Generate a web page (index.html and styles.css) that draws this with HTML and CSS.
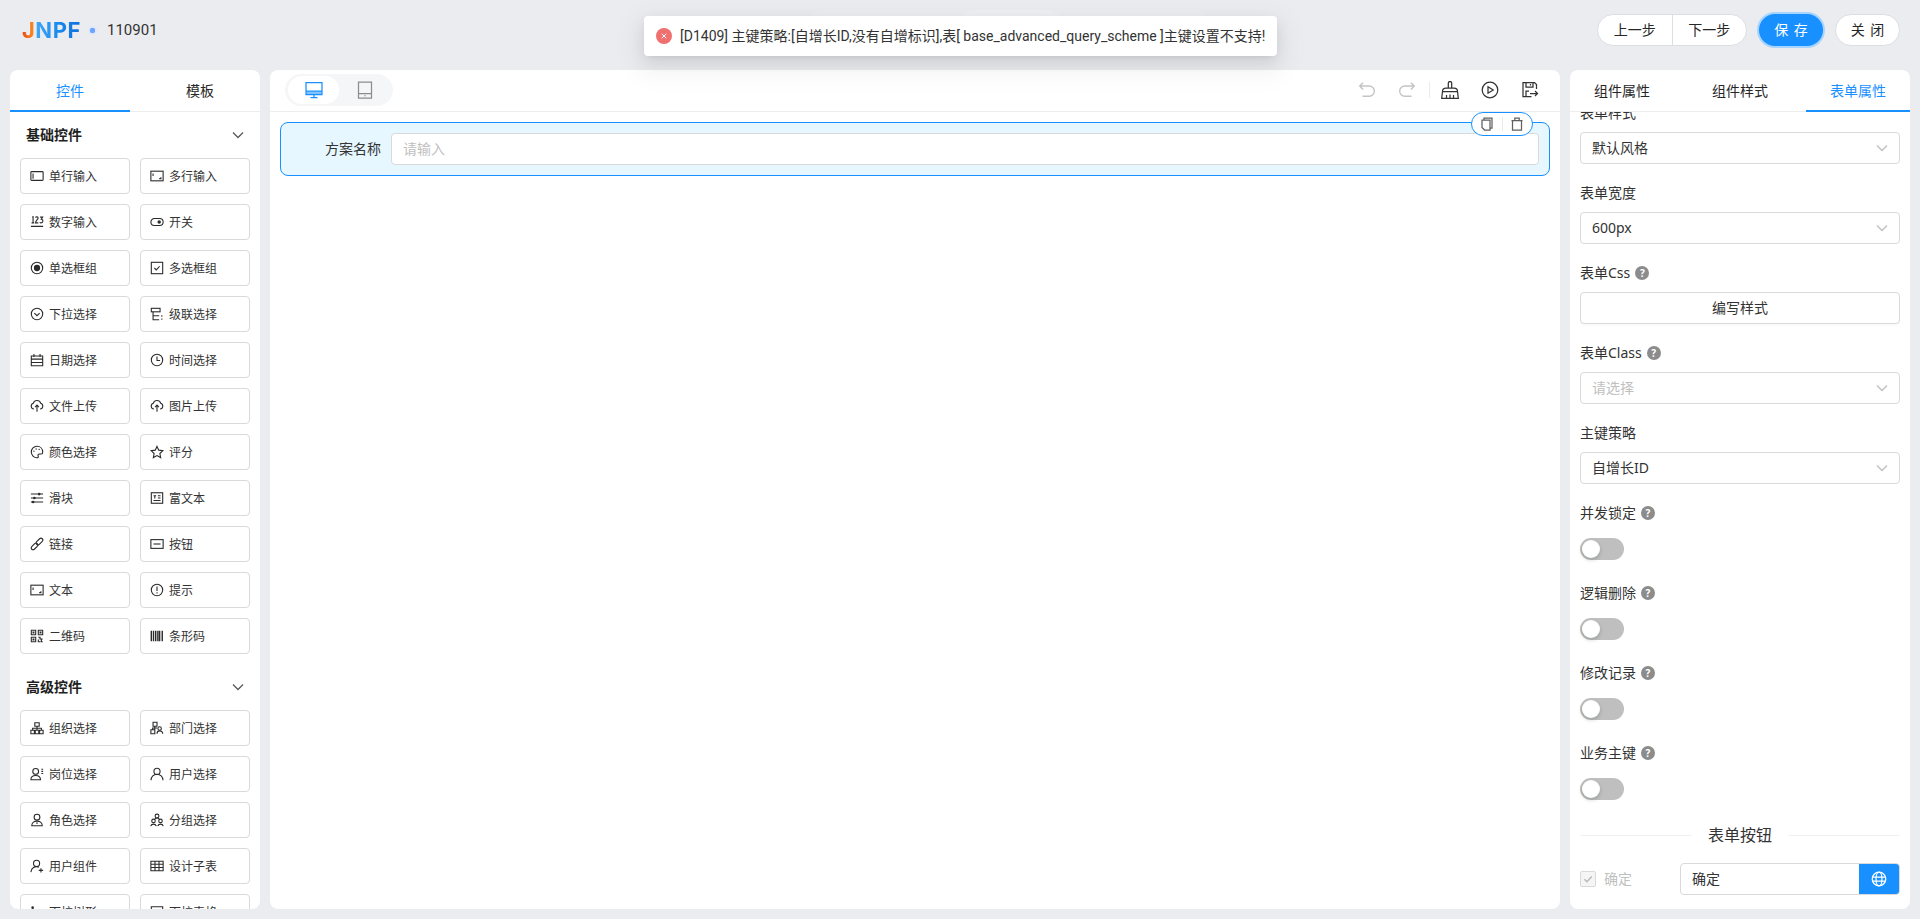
FILE: index.html
```html
<!DOCTYPE html>
<html lang="zh-CN">
<head>
<meta charset="utf-8">
<title>JNPF 表单设计</title>
<link rel="stylesheet" href="styles.css">
</head>
<body>
<svg class="sprite" aria-hidden="true">
  <symbol id="i-input" viewBox="0 0 16 16"><rect x="1" y="3" width="14" height="10" rx="1"/><path d="M3.500 5v6"/></symbol>
  <symbol id="i-area" viewBox="0 0 16 16"><rect x="1" y="2.500" width="14" height="11"/><path d="M3.500 5v3M10.500 11h2V9.500"/></symbol>
  <symbol id="i-num" viewBox="0 0 16 16"><path d="M2.500 2.500l1-.5v7M1.800 9h3M6.300 3c.4-1.200 3-1.200 3 .4 0 1.500-3 3.300-3 5.600h3.200M11.500 2.400h3l-1.600 2.500c2.500 0 2.500 4.100-.2 4.100-.8 0-1.300-.4-1.500-.8M1 13h14"/></symbol>
  <symbol id="i-switch" viewBox="0 0 16 16"><rect x="1" y="4" width="14" height="8" rx="4"/><circle cx="10.500" cy="8" r="2" class="fill"/></symbol>
  <symbol id="i-radio" viewBox="0 0 16 16"><circle cx="8" cy="8" r="6.500"/><circle cx="8" cy="8" r="3.600" class="fill"/></symbol>
  <symbol id="i-check" viewBox="0 0 16 16"><rect x="1.500" y="1.500" width="13" height="13"/><path d="M5 8l2.200 2.200L11 6"/></symbol>
  <symbol id="i-select" viewBox="0 0 16 16"><circle cx="8" cy="8" r="6.500"/><path d="M5 7l3 3 3-3"/></symbol>
  <symbol id="i-cascade" viewBox="0 0 16 16"><rect x="1.500" y="1.500" width="10" height="4"/><path d="M3.500 5.500v9h7M3.500 10h7M13.500 9.500v1.500M13.500 13v1.500"/></symbol>
  <symbol id="i-date" viewBox="0 0 16 16"><path d="M1.500 3.500h13v11h-13zM1.500 7h13M1.500 10.800h13M4.500 1v3.500M11.500 1v3.500"/></symbol>
  <symbol id="i-time" viewBox="0 0 16 16"><circle cx="8" cy="8" r="6.500"/><path d="M8 4v4.500h3.500"/></symbol>
  <symbol id="i-upload" viewBox="0 0 16 16"><path d="M4.500 11.500A3.400 3.400 0 0 1 3.700 4.900 4.500 4.500 0 0 1 12.300 4.900 3.400 3.400 0 0 1 11.500 11.500M8 14.500V7M5.800 9.200 8 7l2.200 2.200"/></symbol>
  <symbol id="i-palette" viewBox="0 0 16 16"><path d="M8 1.500a6.500 6.500 0 1 0 0 13c1.500 0 1.800-1 1.300-2-.6-1.200.2-2.200 1.500-2.200h2.200c1 0 1.500-.7 1.500-2.100C14.500 4 11.500 1.500 8 1.500z"/><circle cx="4.500" cy="7" r=".8" class="fill"/><circle cx="7" cy="4.500" r=".8" class="fill"/><circle cx="10.500" cy="5" r=".8" class="fill"/></symbol>
  <symbol id="i-star" viewBox="0 0 16 16"><path d="M8 1.600l2 4.300 4.700.6-3.400 3.200.9 4.700L8 12.100l-4.200 2.300.9-4.700L1.300 6.500 6 5.900z"/></symbol>
  <symbol id="i-slider" viewBox="0 0 16 16"><path d="M1 3.500h14M1 8h14M1 12.500h14"/><circle cx="10.500" cy="3.500" r="1.500" class="fill"/><circle cx="5" cy="8" r="1.500" class="fill"/><circle cx="3.500" cy="12.500" r="1.500" class="fill"/></symbol>
  <symbol id="i-rich" viewBox="0 0 16 16"><rect x="1.500" y="2" width="13" height="12"/><path d="M4 5.500h3M5.500 5.500v3M9 5.500h3M9 8h3M4 10.800h8"/></symbol>
  <symbol id="i-link" viewBox="0 0 16 16"><g transform="rotate(-45 8 8)"><rect x="-.5" y="5.900" width="9" height="4.200" rx="2.100"/><rect x="7.500" y="5.900" width="9" height="4.200" rx="2.100"/></g></symbol>
  <symbol id="i-button" viewBox="0 0 16 16"><rect x="1" y="3" width="14" height="10"/><path d="M4 8h8"/></symbol>
  <symbol id="i-alert" viewBox="0 0 16 16"><circle cx="8" cy="8" r="6.500"/><path d="M8 4v5M8 10.500V12"/></symbol>
  <symbol id="i-qr" viewBox="0 0 16 16"><path d="M1.500 1.500h5v5h-5zM9.500 1.500h5v5h-5zM1.500 9.500h5v5h-5zM3.500 3.500h1v1h-1zM11.500 3.500h1v1h-1zM3.500 11.500h1v1h-1zM9.500 9.500h2v2h3M9.500 12v2.500h2.500M13 12v2.500h1.500"/></symbol>
  <symbol id="i-bar" viewBox="0 0 16 16"><path d="M1.500 2v12M4 2v12M6.500 2v12M9 2v12M11 2v12M14 2v12" class="thick"/></symbol>
  <symbol id="i-org" viewBox="0 0 16 16"><path d="M5.500 2h5v4h-5zM1 10.500h4v4H1zM6 10.500h4v4H6zM11 10.500h4v4h-4zM8 6v4.500M3 10.500V8.300h10v2.200"/></symbol>
  <symbol id="i-dept" viewBox="0 0 16 16"><path d="M3.500 1.500h4.500v4.500H3.500zM1 10h4.500v4.500H1zM5.500 6v4M3 10V8h5"/><circle cx="11" cy="8.500" r="2"/><path d="M8 14.500a3 3 0 0 1 6.500 0"/></symbol>
  <symbol id="i-post" viewBox="0 0 16 16"><circle cx="6.500" cy="5" r="3.300"/><path d="M1 14.500c0-6.500 11-6.500 11 0zM13 2.500h2M13 5h2M13 7.500h2"/></symbol>
  <symbol id="i-user" viewBox="0 0 16 16"><circle cx="8" cy="5" r="3.500"/><path d="M1.200 15a6.800 6.800 0 0 1 13.600 0"/></symbol>
  <symbol id="i-role" viewBox="0 0 16 16"><circle cx="8" cy="4.800" r="3.300"/><path d="M2 14.500c0-7 12-7 12 0zM8 10.500v2"/></symbol>
  <symbol id="i-group" viewBox="0 0 16 16"><circle cx="8" cy="3.500" r="2.200"/><circle cx="4" cy="9" r="2"/><circle cx="12" cy="9" r="2"/><path d="M.8 15a3.400 3.400 0 0 1 6.400 0M8.800 15a3.400 3.400 0 0 1 6.400 0M5.500 7a3 3 0 0 1 5 0"/></symbol>
  <symbol id="i-ucomp" viewBox="0 0 16 16"><circle cx="7.500" cy="5" r="3.500"/><path d="M1 15a6.500 6.500 0 0 1 9-5.700M12.500 10.500v5M10 13h5"/></symbol>
  <symbol id="i-table" viewBox="0 0 16 16"><path d="M1 2.500h14v11H1zM1 6h14M1 9.800h14M5.700 2.500v11M10.300 2.500v11"/></symbol>
  <symbol id="i-tree" viewBox="0 0 16 16"><circle cx="3" cy="3" r="1.500" class="fill"/><path d="M3 4v10M3 8h4M3 13h4"/></symbol>
  <symbol id="i-dtable" viewBox="0 0 16 16"><path d="M1.500 2h13v12h-13zM1.500 5.500h13M1.500 9h13"/></symbol>
  <symbol id="i-chev" viewBox="0 0 12 12"><path d="M1 3.500l5 5 5-5"/></symbol>
  <symbol id="i-undo" viewBox="0 0 16 16"><path d="M4.500 1.500L1.500 4.500l3 3M1.500 4.500h8.500a4 4 0 0 1 0 9H4"/></symbol>
  <symbol id="i-redo" viewBox="0 0 16 16"><path d="M11.500 1.500l3 3-3 3M14.500 4.500H6a4 4 0 0 0 0 9h6"/></symbol>
  <symbol id="i-brush" viewBox="0 0 18 18"><path d="M7.300 7V2.200a1.700 1.700 0 0 1 3.400 0V7zM1.500 10.500c0-2.500 1.500-3.500 3.500-3.500h8c2 0 3.500 1 3.500 3.500zM1.500 10.500.7 17.300h16.600l-.8-6.800M5.500 17.300V14M9 17.300v-3.800M12.500 17.300V14"/></symbol>
  <symbol id="i-play" viewBox="0 0 18 18"><circle cx="9" cy="9" r="7.800"/><path d="M7 5.800L12.200 9 7 12.200z"/></symbol>
  <symbol id="i-save" viewBox="0 0 18 18"><path d="M10.500 15.500H2V1.500h11.500l2 2V8M5 1.500v4.500h7V1.500M9.500 3v1.500M9 12.500h7.500M14 10l2.500 2.500L14 15M5 15.500V10h3"/></symbol>
  <symbol id="i-desktop" viewBox="0 0 18 18"><path d="M1 1.500h16v12.200H1zM1 10h16M9 13.700v2.800M5.500 16.500h7"/><path d="M1 10.500h16v3H1z" class="band"/></symbol>
  <symbol id="i-tablet" viewBox="0 0 18 18"><path d="M2.500 1h13v16h-13zM2.500 12.500h13"/><circle cx="9" cy="14.800" r=".7" class="fill"/></symbol>
  <symbol id="i-copy" viewBox="0 0 14 14"><path d="M4 2.800V1h8v10h-2M2 3h8v10H4.500L2 10.500z"/></symbol>
  <symbol id="i-trash" viewBox="0 0 14 14"><path d="M2.500 3.500h9V13h-9zM1.500 3.500h11M4.800 3.500V1.200h4.400v2.300"/></symbol>
  <symbol id="i-globe" viewBox="0 0 16 16"><circle cx="8" cy="8" r="6.800"/><ellipse cx="8" cy="8" rx="3" ry="6.800"/><path d="M1.500 6h13M1.500 10h13"/></symbol>
  <symbol id="i-tick" viewBox="0 0 16 16"><path d="M3.800 8.200l3 3 5.500-6"/></symbol>
</svg>

<header class="topbar">
  <div class="brand">
    <span class="logo">JNPF</span>
    <i class="brand-dot"></i>
    <span class="form-name">110901</span>
  </div>
  <div class="steps"><span class="step"></span><span class="step step-on"></span><span class="step"></span></div>
  <div class="top-actions">
    <div class="btn-group"><button class="pill">上一步</button><button class="pill">下一步</button></div>
    <button class="save">保 存</button>
    <button class="close">关 闭</button>
  </div>
</header>

<div class="toast">
  <svg class="toast-icon" viewBox="0 0 16 16"><circle cx="8" cy="8" r="8"/><path d="M5.700 5.700l4.600 4.600M10.300 5.700l-4.600 4.600"/></svg>
  <span>[D1409] 主键策略:[自增长ID,没有自增标识],表[ base_advanced_query_scheme ]主键设置不支持!</span>
</div>

<main class="workspace">
  <aside class="panel left">
    <div class="tabs"><div class="tab tab-left on">控件</div><div class="tab tab-left">模板</div></div>
    <div class="palette">
      <div class="sec-head"><span>基础控件</span><svg class="chev"><use href="#i-chev"/></svg></div>
      <div class="grid">
        <div class="comp"><svg class="ic"><use href="#i-input"/></svg>单行输入</div>
        <div class="comp"><svg class="ic"><use href="#i-area"/></svg>多行输入</div>
        <div class="comp"><svg class="ic"><use href="#i-num"/></svg>数字输入</div>
        <div class="comp"><svg class="ic"><use href="#i-switch"/></svg>开关</div>
        <div class="comp"><svg class="ic"><use href="#i-radio"/></svg>单选框组</div>
        <div class="comp"><svg class="ic"><use href="#i-check"/></svg>多选框组</div>
        <div class="comp"><svg class="ic"><use href="#i-select"/></svg>下拉选择</div>
        <div class="comp"><svg class="ic"><use href="#i-cascade"/></svg>级联选择</div>
        <div class="comp"><svg class="ic"><use href="#i-date"/></svg>日期选择</div>
        <div class="comp"><svg class="ic"><use href="#i-time"/></svg>时间选择</div>
        <div class="comp"><svg class="ic"><use href="#i-upload"/></svg>文件上传</div>
        <div class="comp"><svg class="ic"><use href="#i-upload"/></svg>图片上传</div>
        <div class="comp"><svg class="ic"><use href="#i-palette"/></svg>颜色选择</div>
        <div class="comp"><svg class="ic"><use href="#i-star"/></svg>评分</div>
        <div class="comp"><svg class="ic"><use href="#i-slider"/></svg>滑块</div>
        <div class="comp"><svg class="ic"><use href="#i-rich"/></svg>富文本</div>
        <div class="comp"><svg class="ic"><use href="#i-link"/></svg>链接</div>
        <div class="comp"><svg class="ic"><use href="#i-button"/></svg>按钮</div>
        <div class="comp"><svg class="ic"><use href="#i-area"/></svg>文本</div>
        <div class="comp"><svg class="ic"><use href="#i-alert"/></svg>提示</div>
        <div class="comp"><svg class="ic"><use href="#i-qr"/></svg>二维码</div>
        <div class="comp"><svg class="ic"><use href="#i-bar"/></svg>条形码</div>
      </div>
      <div class="sec-head sec-next"><span>高级控件</span><svg class="chev"><use href="#i-chev"/></svg></div>
      <div class="grid">
        <div class="comp"><svg class="ic"><use href="#i-org"/></svg>组织选择</div>
        <div class="comp"><svg class="ic"><use href="#i-dept"/></svg>部门选择</div>
        <div class="comp"><svg class="ic"><use href="#i-post"/></svg>岗位选择</div>
        <div class="comp"><svg class="ic"><use href="#i-user"/></svg>用户选择</div>
        <div class="comp"><svg class="ic"><use href="#i-role"/></svg>角色选择</div>
        <div class="comp"><svg class="ic"><use href="#i-group"/></svg>分组选择</div>
        <div class="comp"><svg class="ic"><use href="#i-ucomp"/></svg>用户组件</div>
        <div class="comp"><svg class="ic"><use href="#i-table"/></svg>设计子表</div>
        <div class="comp"><svg class="ic"><use href="#i-tree"/></svg>下拉树形</div>
        <div class="comp"><svg class="ic"><use href="#i-dtable"/></svg>下拉表格</div>
      </div>
    </div>
  </aside>

  <section class="panel center">
    <div class="toolbar">
      <div class="device">
        <span class="dev dev-on"><svg class="ic18"><use href="#i-desktop"/></svg></span>
        <span class="dev dev-off"><svg class="ic18"><use href="#i-tablet"/></svg></span>
      </div>
      <div class="tools">
        <span class="tool off"><svg class="ic18"><use href="#i-undo"/></svg></span>
        <span class="tool off"><svg class="ic18"><use href="#i-redo"/></svg></span>
        <i class="tool-sep"></i>
        <span class="tool"><svg class="ic18"><use href="#i-brush"/></svg></span>
        <span class="tool"><svg class="ic18"><use href="#i-play"/></svg></span>
        <span class="tool"><svg class="ic18"><use href="#i-save"/></svg></span>
      </div>
    </div>
    <div class="canvas">
      <div class="row-item">
        <label class="row-label">方案名称</label>
        <div class="row-input">请输入</div>
        <div class="row-actions">
          <span class="row-act"><svg class="ic14"><use href="#i-copy"/></svg></span>
          <span class="row-act"><svg class="ic14"><use href="#i-trash"/></svg></span>
        </div>
      </div>
    </div>
  </section>

  <aside class="panel right">
    <div class="tabs"><div class="tab tab-right">组件属性</div><div class="tab tab-right">组件样式</div><div class="tab tab-right on">表单属性</div></div>
    <div class="props">
      <form class="props-inner">
        <div class="field"><div class="f-label">表单样式</div><div class="sel">默认风格<svg class="sel-chev"><use href="#i-chev"/></svg></div></div>
        <div class="field"><div class="f-label">表单宽度</div><div class="sel">600px<svg class="sel-chev"><use href="#i-chev"/></svg></div></div>
        <div class="field"><div class="f-label">表单Css<i class="help">?</i></div><div class="wide-btn">编写样式</div></div>
        <div class="field"><div class="f-label">表单Class<i class="help">?</i></div><div class="sel ph">请选择<svg class="sel-chev"><use href="#i-chev"/></svg></div></div>
        <div class="field"><div class="f-label">主键策略</div><div class="sel">自增长ID<svg class="sel-chev"><use href="#i-chev"/></svg></div></div>
        <div class="field"><div class="f-label">并发锁定<i class="help">?</i></div><div class="ctl"><span class="sw"></span></div></div>
        <div class="field"><div class="f-label">逻辑删除<i class="help">?</i></div><div class="ctl"><span class="sw"></span></div></div>
        <div class="field"><div class="f-label">修改记录<i class="help">?</i></div><div class="ctl"><span class="sw"></span></div></div>
        <div class="field"><div class="f-label">业务主键<i class="help">?</i></div><div class="ctl"><span class="sw"></span></div></div>
        <div class="divider"><span>表单按钮</span></div>
        <div class="btn-row">
          <div class="cb-wrap"><span class="cb"><svg class="cb-tick"><use href="#i-tick"/></svg></span><span class="cb-text">确定</span></div>
          <div class="addon-input"><span class="addon-text">确定</span><span class="addon"><svg class="globe"><use href="#i-globe"/></svg></span></div>
        </div>
      </form>
    </div>
  </aside>
</main>
</body>
</html>
```

FILE: styles.css
```css
* { box-sizing: border-box; }
html, body { height: 100%; }
body {
  margin: 0;
  background: #ebecf0;
  color: #262626;
  font: 14px/22px "Noto Sans", "Noto Sans CJK SC", sans-serif;
  overflow: hidden;
  position: relative;
  display: flex;
  flex-direction: column;
}
.sprite { display: none; }
svg { fill: none; stroke: currentColor; stroke-width: 1.25; }
symbol .fill { fill: currentColor; stroke: none; }
symbol .band { fill: currentColor; fill-opacity: .55; stroke: none; }
symbol .thick { stroke-width: 1.6; }

/* top bar */
.topbar {
  height: 60px;
  flex: none;
  display: flex;
  align-items: center;
  justify-content: space-between;
  padding: 0 20px 0 22px;
  position: relative;
}
.brand { display: flex; align-items: center; width: 400px; }
.logo {
  font: 700 22px/22px Inter, sans-serif;
  letter-spacing: .5px;
  width: 58px;
  background: linear-gradient(90deg, #ee4a17 0, #f7871f 19%, #40a6f6 25%, #1a8cf0 60%, #0f6fdc 100%);
  -webkit-background-clip: text;
  background-clip: text;
  color: transparent;
}
.brand-dot {
  width: 9px; height: 9px; margin: 0 10px 0 8px;
  border-radius: 50%;
  background: radial-gradient(circle, #6ea3ff 0 2.500px, #dfe8fb 3px);
}
.form-name { font: 15px/22px Roboto, sans-serif; color: #333; }
.steps {
  align-self: flex-start;
  margin-top: 10px;
  width: 405px;
  height: 38px;
  display: flex;
  background: #edeef2;
  border-radius: 19px;
}
.step { flex: 1; border-radius: 19px; }
.step-on { flex: none; width: 108px; background: #f0f1f4; }
.top-actions { display: flex; align-items: center; gap: 12px; }
.btn-group {
  display: flex;
  width: 150px; height: 32px;
  background: #fff;
  border: 1px solid #dcdee2;
  border-radius: 16px;
}
button { font: inherit; color: #262626; padding: 0; background: #fff; }
.pill { flex: 1; border: 0; background: none; }
.pill + .pill { border-left: 1px solid #dcdee2; }
.save {
  width: 64px; height: 32px;
  border: 0; border-radius: 16px;
  background: #1890ff; color: #fff;
  box-shadow: 0 0 0 2px #a6d4ff;
  word-spacing: 2px;
}
.close {
  width: 65px; height: 32px;
  border: 1px solid #dcdee2;
  border-radius: 16px;
  word-spacing: 2px;
}

/* toast */
.toast {
  position: absolute;
  top: 16px; left: 644px;
  width: 633px; height: 40px;
  display: flex;
  align-items: center;
  gap: 8px;
  padding-left: 12px;
  background: #fff;
  border-radius: 4px;
  box-shadow: 0 6px 16px rgba(0,0,0,.08), 0 3px 6px -4px rgba(0,0,0,.12), 0 9px 28px 8px rgba(0,0,0,.05);
  font-family: Roboto, "Noto Sans CJK SC", sans-serif;
  white-space: nowrap;
  color: #333;
  z-index: 5;
}
.toast-icon { width: 16px; height: 16px; flex: none; stroke: #fff; stroke-width: 1; }
.toast-icon circle { fill: #f0706f; stroke: none; }

/* workspace */
.workspace {
  flex: 1;
  min-height: 0;
  display: flex;
  gap: 10px;
  padding: 10px;
}
.panel {
  background: #fff;
  border-radius: 8px;
  overflow: hidden;
  display: flex;
  flex-direction: column;
}
.left { width: 250px; flex: none; }
.center { flex: 1; min-width: 0; }
.right { width: 340px; flex: none; }

.tabs {
  flex: none;
  height: 42px;
  display: flex;
  justify-content: space-between;
  border-bottom: 1px solid #ededed;
}
.tab { height: 42px; line-height: 41px; text-align: center; color: #262626; }
.tab-left { width: 120px; }
.tab-right { width: 104px; }
.tab.on { color: #1890ff; border-bottom: 2px solid #1890ff; }

/* palette */
.palette { flex: 1; min-height: 0; overflow: hidden; padding: 0 10px; }
.sec-head {
  height: 46px;
  display: flex;
  align-items: center;
  justify-content: space-between;
  padding: 0 6px;
  font-weight: 700;
  color: #1f1f1f;
}
.sec-next { margin-top: 10px; }
.chev { width: 12px; height: 12px; stroke: #595959; }
.grid { display: grid; grid-template-columns: 110px 110px; gap: 10px; }
.comp {
  height: 36px;
  display: flex;
  align-items: center;
  gap: 5px;
  padding: 2px 0 0 9px;
  background: #fff;
  border: 1px solid #d9d9d9;
  border-radius: 4px;
  font-size: 12px;
  color: #333;
  white-space: nowrap;
}
.ic { width: 14px; height: 14px; flex: none; margin-bottom: 2px; color: #2b2b2b; }

/* toolbar */
.toolbar {
  flex: none;
  height: 42px;
  display: flex;
  align-items: center;
  justify-content: space-between;
  padding: 0 10px 1px 15px;
  border-bottom: 1px solid #ededed;
}
.device {
  width: 108px; height: 32px;
  display: flex;
  align-items: center;
  padding: 0 3px;
  background: #f5f6f8;
  border-radius: 16px;
}
.dev { width: 52px; height: 28px; display: flex; align-items: center; justify-content: center; border-radius: 14px; }
.dev-on { background: #fff; color: #1890ff; }
.dev-off { color: #8c8c8c; }
.ic18 { width: 18px; height: 18px; }
.tools { display: flex; align-items: center; }
.tool { width: 40px; height: 24px; display: flex; align-items: center; justify-content: center; color: #333; }
.tool.off { color: #c4c4c4; }
.tool-sep { width: 1px; height: 16px; margin-left: 2px; background: #ebebeb; }

/* canvas */
.canvas { flex: 1; padding: 10px; }
.row-item {
  position: relative;
  height: 54px;
  display: flex;
  align-items: center;
  padding: 0 10px;
  gap: 10px;
  background: #e6f7ff;
  border: 1px solid #1890ff;
  border-radius: 8px;
}
.row-label { width: 90px; flex: none; text-align: right; color: #333; }
.row-input {
  flex: 1;
  height: 32px;
  line-height: 30px;
  padding: 0 11px;
  background: #fff;
  border: 1px solid #d9d9d9;
  border-radius: 4px;
  color: #bfbfbf;
}
.row-actions {
  position: absolute;
  top: -11px; right: 16px;
  width: 62px; height: 24px;
  display: flex;
  align-items: center;
  background: #fff;
  border: 1px solid #1890ff;
  border-radius: 12px;
  z-index: 1;
}
.row-act { flex: 1; display: flex; justify-content: center; color: #606060; }
.row-act + .row-act { border-left: 1px solid #ebebeb; }
.ic14 { width: 14px; height: 14px; }

/* props */
.props { flex: 1; min-height: 0; overflow: hidden; padding: 0 10px; }
.props-inner { margin-top: -10px; }
.field { margin-bottom: 18px; }
.f-label { height: 30px; padding-bottom: 8px; display: flex; align-items: center; color: #333; }
.help {
  width: 14px; height: 14px;
  margin-left: 5px;
  border-radius: 50%;
  background: #8c8c8c;
  color: #fff;
  font: 700 10px/14px "Noto Sans", sans-serif;
  text-align: center;
}
.sel, .wide-btn {
  height: 32px;
  border: 1px solid #d9d9d9;
  border-radius: 4px;
  background: #fff;
  color: #333;
}
.sel {
  display: flex;
  align-items: center;
  justify-content: space-between;
  padding: 0 11px;
}
.sel.ph { color: #bfbfbf; }
.sel-chev { width: 12px; height: 12px; stroke: #bfbfbf; }
.wide-btn { text-align: center; line-height: 30px; box-shadow: 0 2px 0 rgba(0,0,0,.02); }
.ctl { height: 32px; padding-top: 2px; display: flex; align-items: center; }
.sw {
  position: relative;
  width: 44px; height: 22px;
  border-radius: 11px;
  background: #bfbfbf;
}
.sw::after {
  content: "";
  position: absolute;
  top: 2px; left: 2px;
  width: 18px; height: 18px;
  border-radius: 50%;
  background: #fff;
  box-shadow: 0 2px 4px rgba(0,35,11,.2);
}
.divider {
  height: 26px;
  margin-bottom: 15px;
  display: flex;
  align-items: center;
  gap: 16px;
  font-size: 16px;
  color: #333;
}
.divider span { flex: none; }
.divider::before, .divider::after { content: ""; flex: 1; height: 1px; background: #f0f0f0; }
.btn-row { display: flex; align-items: center; }
.cb-wrap { width: 100px; flex: none; display: flex; align-items: center; gap: 8px; }
.cb {
  width: 16px; height: 16px;
  background: #f5f5f5;
  border: 1px solid #d9d9d9;
  border-radius: 2px;
  display: flex;
}
.cb-tick { width: 14px; height: 14px; stroke: #b8b8b8; stroke-width: 1.6; }
.cb-text { color: #bfbfbf; }
.addon-input {
  flex: 1;
  height: 32px;
  display: flex;
  border: 1px solid #d9d9d9;
  border-radius: 4px;
  overflow: hidden;
}
.addon-text { flex: 1; padding: 0 11px; line-height: 30px; color: #333; }
.addon {
  width: 40px;
  display: flex;
  align-items: center;
  justify-content: center;
  background: #1890ff;
}
.globe { width: 16px; height: 16px; stroke: #fff; }
```
